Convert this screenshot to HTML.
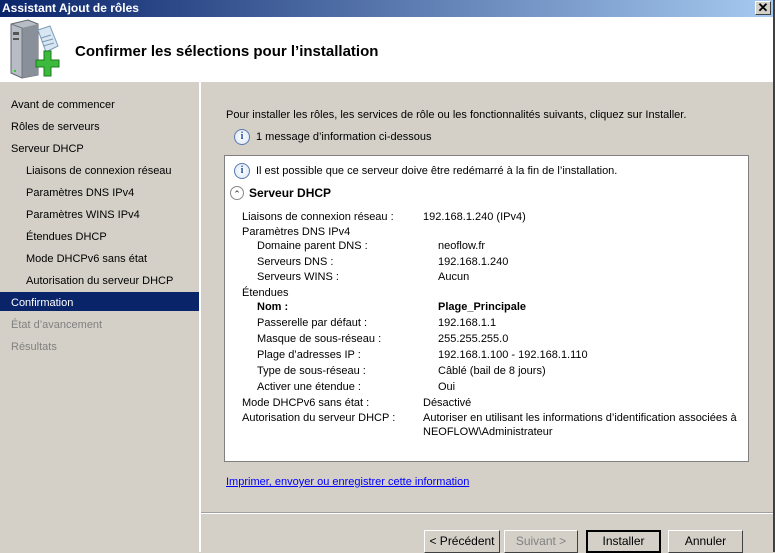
<!DOCTYPE html>
<html><head><meta charset="utf-8"><style>
*{margin:0;padding:0;box-sizing:border-box}
body{width:775px;height:552px;overflow:hidden;background:#d4d0c8;font-family:"Liberation Sans",sans-serif;font-size:11px;color:#000;position:relative}
.a{position:absolute;white-space:nowrap;margin-top:3px}
.bx{margin-top:0}
#title{left:0;top:0;width:775px;height:17px;background:linear-gradient(90deg,#0a246a,#a6caf0);color:#fff;font-weight:bold;font-size:12px;padding:1px 0 0 2px;margin-top:0}
#close{left:755px;top:1px;width:16px;height:14px;background:#d4d0c8;border:1px solid;border-color:#fff #404040 #404040 #fff;font-size:13px;font-weight:bold;text-align:center;line-height:12px;margin-top:0}
#head{left:0;top:17px;width:773px;height:65px;background:#fff;margin-top:0}
#rb{left:773px;top:0;width:2px;height:552px;background:#404040}
.nav{left:11px}
.sub{left:26px}
.dis{color:#808080}
#sel{left:0;top:292px;width:199px;height:19px;background:#0a246a}
#vsep{left:199px;top:82px;width:2px;height:470px;background:#fff}
#box{left:224px;top:155px;width:525px;height:307px;background:#fff;border:1px solid #808080}
.row{display:flex;align-items:center;gap:6px}
.ic{display:inline-block;width:16px;height:16px;border:1px solid #5a7ab0;border-radius:50%;text-align:center;font:bold 10px "Liberation Serif",serif;color:#1f4e9c;line-height:14px;background:radial-gradient(#fff,#d8e4f4)}
.btn{top:530px;height:23px;width:76px;border:1px solid;border-color:#fff #404040 #404040 #fff;text-align:center;line-height:21px;font-size:12px;margin-top:0}
</style></head><body>
<div class="a" id="title">Assistant Ajout de rôles</div>
<div class="a" id="close">✕</div>
<div class="a" id="head">
<svg style="position:absolute;left:8px;top:1px" width="52" height="62" viewBox="0 0 52 62">
<path d="M3 6 L20 2 L30 6 L30 57 L14 60 L3 55Z" fill="#b8bcc4" stroke="#606670"/>
<path d="M14 10 L30 6 L30 57 L14 60Z" fill="#8a9099"/>
<path d="M3 6 L14 10 L14 60" fill="none" stroke="#707680"/>
<rect x="5" y="14" width="6" height="3" fill="#555"/><rect x="5" y="20" width="6" height="2" fill="#555"/>
<rect x="6" y="52" width="2" height="2" fill="#3c3"/>
<path d="M30 12 L42 8 L50 28 L38 34 Z" fill="#d8e6f2" stroke="#7a9ab8"/>
<path d="M33 20 L43 17 M34 24 L45 21 M35 28 L46 25" stroke="#7a9ab8"/>
<path d="M30 44 h8 v-9 h7 v9 h8 v7 h-8 v9 h-7 v-9 h-8z" fill="#3cba3c" stroke="#1c7a1c" transform="translate(-2,-2)"/>
</svg>
<div class="a" style="left:75px;top:23px;font-size:15px;font-weight:bold">Confirmer les sélections pour l’installation</div>
</div>
<div class="a bx" id="rb"></div>
<div class="a bx" id="vsep"></div>
<div class="a bx" id="sel"></div>
<div class="a nav" style="top:96px">Avant de commencer</div>
<div class="a nav" style="top:118px">Rôles de serveurs</div>
<div class="a nav" style="top:140px">Serveur DHCP</div>
<div class="a sub" style="top:162px">Liaisons de connexion réseau</div>
<div class="a sub" style="top:184px">Paramètres DNS IPv4</div>
<div class="a sub" style="top:206px">Paramètres WINS IPv4</div>
<div class="a sub" style="top:228px">Étendues DHCP</div>
<div class="a sub" style="top:250px">Mode DHCPv6 sans état</div>
<div class="a sub" style="top:272px">Autorisation du serveur DHCP</div>
<div class="a nav" style="top:294px;color:#fff">Confirmation</div>
<div class="a nav dis" style="top:316px">État d’avancement</div>
<div class="a nav dis" style="top:338px">Résultats</div>

<div class="a" style="left:226px;top:106px">Pour installer les rôles, les services de rôle ou les fonctionnalités suivants, cliquez sur Installer.</div>
<div class="a row bx" style="left:234px;top:129px"><span class="ic">i</span><span>1 message d’information ci-dessous</span></div>
<div class="a bx" id="box"></div>
<div class="a row bx" style="left:234px;top:163px"><span class="ic">i</span><span>Il est possible que ce serveur doive être redémarré à la fin de l’installation.</span></div>
<div class="a row bx" style="left:230px;top:186px;gap:5px"><span class="ic" style="width:14px;height:14px;border-color:#888;background:#fff;color:#333;font:9px sans-serif;line-height:14px">⌃</span><b style="font-size:12px">Serveur DHCP</b></div>
<div class="a" style="left:242px;top:208px">Liaisons de connexion réseau :</div><div class="a" style="left:423px;top:208px">192.168.1.240 (IPv4)</div>
<div class="a" style="left:242px;top:223px">Paramètres DNS IPv4</div>
<div class="a" style="left:257px;top:237px">Domaine parent DNS :</div><div class="a" style="left:438px;top:237px">neoflow.fr</div>
<div class="a" style="left:257px;top:253px">Serveurs DNS :</div><div class="a" style="left:438px;top:253px">192.168.1.240</div>
<div class="a" style="left:257px;top:268px">Serveurs WINS :</div><div class="a" style="left:438px;top:268px">Aucun</div>
<div class="a" style="left:242px;top:284px">Étendues</div>
<div class="a" style="left:257px;top:298px;font-weight:bold">Nom :</div><div class="a" style="left:438px;top:298px;font-weight:bold">Plage_Principale</div>
<div class="a" style="left:257px;top:314px">Passerelle par défaut :</div><div class="a" style="left:438px;top:314px">192.168.1.1</div>
<div class="a" style="left:257px;top:330px">Masque de sous-réseau :</div><div class="a" style="left:438px;top:330px">255.255.255.0</div>
<div class="a" style="left:257px;top:346px">Plage d’adresses IP :</div><div class="a" style="left:438px;top:346px">192.168.1.100 - 192.168.1.110</div>
<div class="a" style="left:257px;top:362px">Type de sous-réseau :</div><div class="a" style="left:438px;top:362px">Câblé (bail de 8 jours)</div>
<div class="a" style="left:257px;top:378px">Activer une étendue :</div><div class="a" style="left:438px;top:378px">Oui</div>
<div class="a" style="left:242px;top:394px">Mode DHCPv6 sans état :</div><div class="a" style="left:423px;top:394px">Désactivé</div>
<div class="a" style="left:242px;top:409px">Autorisation du serveur DHCP :</div><div class="a" style="left:423px;top:409px">Autoriser en utilisant les informations d’identification associées à</div>
<div class="a" style="left:423px;top:423px">NEOFLOW\Administrateur</div>
<div class="a" style="left:226px;top:473px;color:#0000ff;text-decoration:underline">Imprimer, envoyer ou enregistrer cette information</div>
<div class="a bx" style="left:201px;top:513px;width:572px;height:1px;background:#fff"></div>
<div class="a bx" style="left:201px;top:512px;width:572px;height:1px;background:#a0a0a0"></div>
<div class="a btn" style="left:424px">&lt; Précédent</div>
<div class="a btn dis" style="left:504px;width:74px">Suivant &gt;</div>
<div class="a btn" style="left:586px;width:75px;border:2px solid #000;line-height:19px">Installer</div>
<div class="a btn" style="left:668px;width:75px">Annuler</div>
</body></html>
